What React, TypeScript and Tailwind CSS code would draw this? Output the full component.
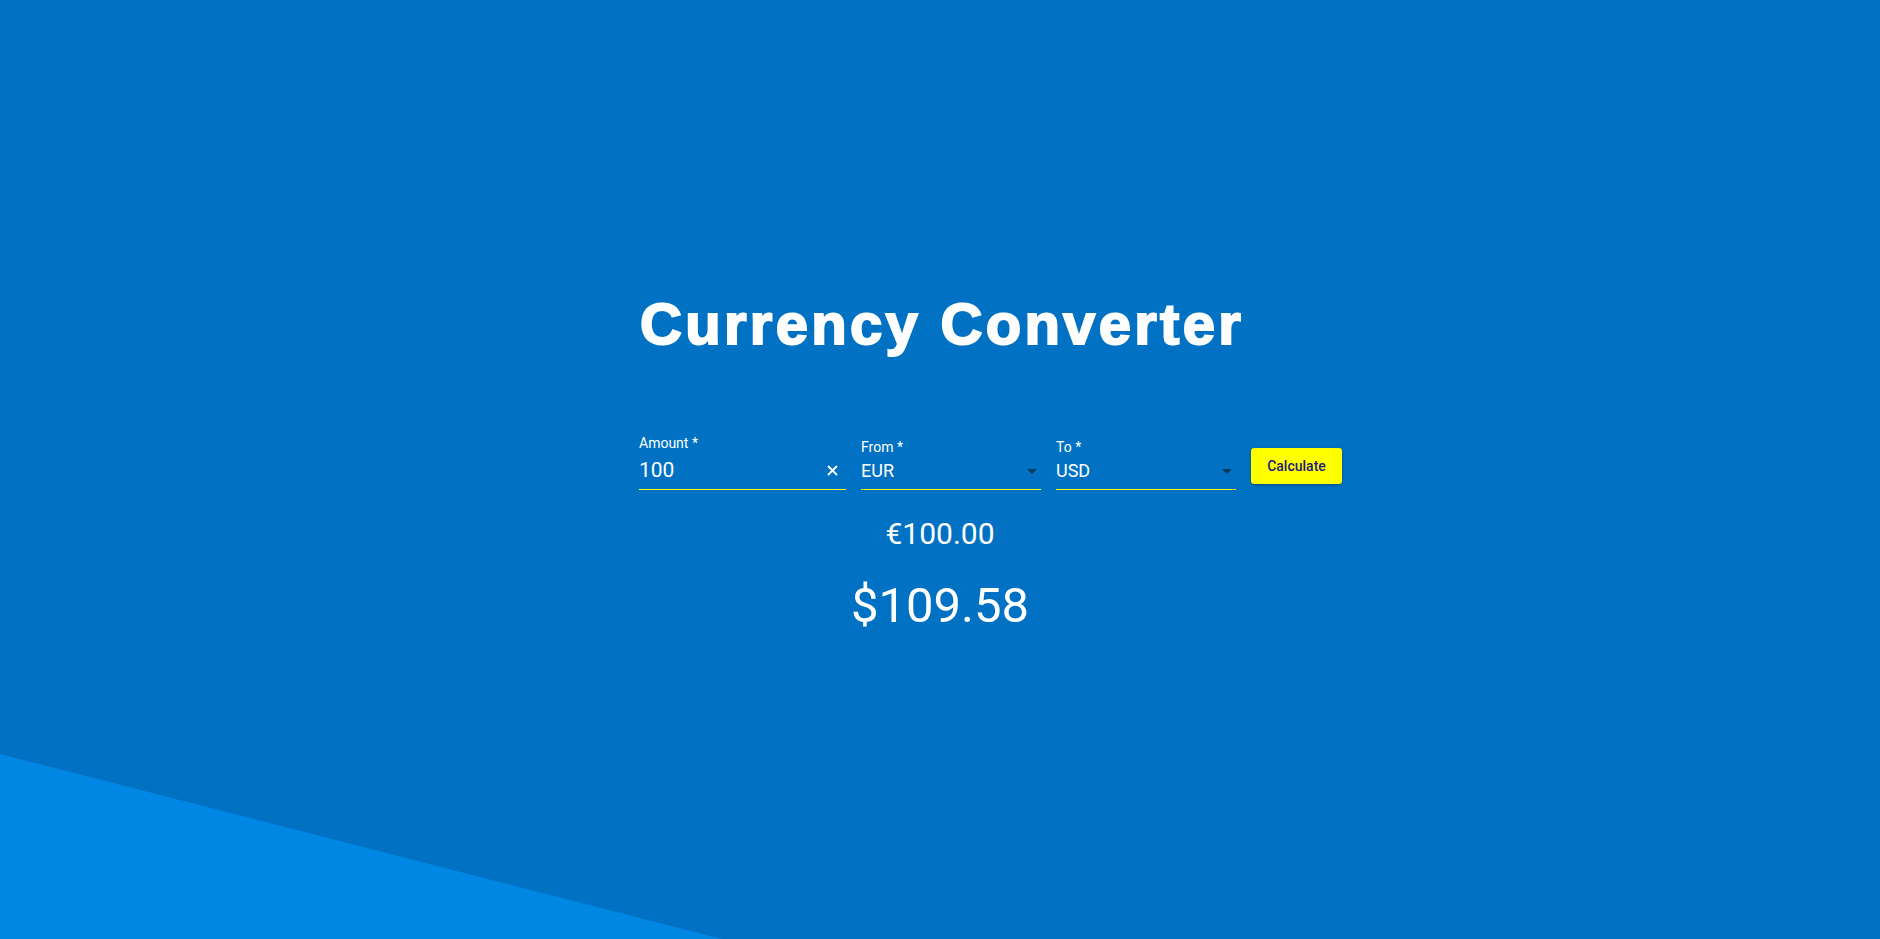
const fieldClass = "flex flex-col border-b border-[#ffff00] text-white";

function ClearIcon() {
  return (
    <svg width="11" height="11" viewBox="0 0 11 11" className="shrink-0">
      <path d="M1 1L10 10M10 1L1 10" stroke="white" strokeWidth="1.8" />
    </svg>
  );
}

function ArrowIcon() {
  return (
    <svg width="10" height="5" viewBox="0 0 10 5" className="shrink-0">
      <path d="M0 0H10L5 5Z" fill="#05385f" />
    </svg>
  );
}

function SelectField({ label, value, width }: { label: string; value: string; width: string }) {
  return (
    <div className={`${fieldClass} ${width} pb-[6px]`}>
      <label className="mt-[4px] text-[14px] leading-[16px]">{label}</label>
      <div className="mt-[4px] flex h-[24px] items-center justify-between pr-[4px]">
        <span className="text-[18px] leading-[24px]">{value}</span>
        <ArrowIcon />
      </div>
    </div>
  );
}

export default function App() {
  return (
    <div className="relative h-[939px] w-full overflow-hidden bg-[#0172c3] font-['Roboto',sans-serif]">
      <svg
        className="absolute bottom-0 left-0"
        width="722"
        height="185"
        viewBox="0 0 722 185"
      >
        <path d="M0 0L722 185H0Z" fill="#0087e4" />
      </svg>

      <div className="relative mx-auto flex w-[600px] flex-col pt-[295px]">
        <h1 className="whitespace-nowrap text-center font-['Liberation_Sans',Arial,sans-serif] text-[58px] font-bold leading-[58px] tracking-[3.3px] text-white [-webkit-text-stroke:2px_white]">
          Currency Converter
        </h1>

        <div className="-ml-px mt-[82px] flex w-[703px] items-start gap-[15px]">
          <div className={`${fieldClass} w-[207px] pb-[7px]`}>
            <label className="text-[14px] leading-[16px]">Amount *</label>
            <div className="mt-[7px] flex h-[24px] items-center justify-between pr-[8px]">
              <span className="text-[21px] leading-[24px]">100</span>
              <ClearIcon />
            </div>
          </div>

          <SelectField label="From *" value="EUR" width="w-[180px]" />
          <SelectField label="To *" value="USD" width="w-[180px]" />

          <button className="mt-[13px] h-[36px] w-[91px] rounded-[3px] bg-[#ffff00] text-[14px] font-medium text-[#1e1b7a] shadow-[0_1px_3px_rgba(0,0,0,0.35)]">
            Calculate
          </button>
        </div>

        <div className="mt-[26px] text-center text-[30px] leading-[36px] text-white">€100.00</div>
        <div className="mt-[26px] text-center text-[49px] leading-[56px] text-white">$109.58</div>
      </div>
    </div>
  );
}
